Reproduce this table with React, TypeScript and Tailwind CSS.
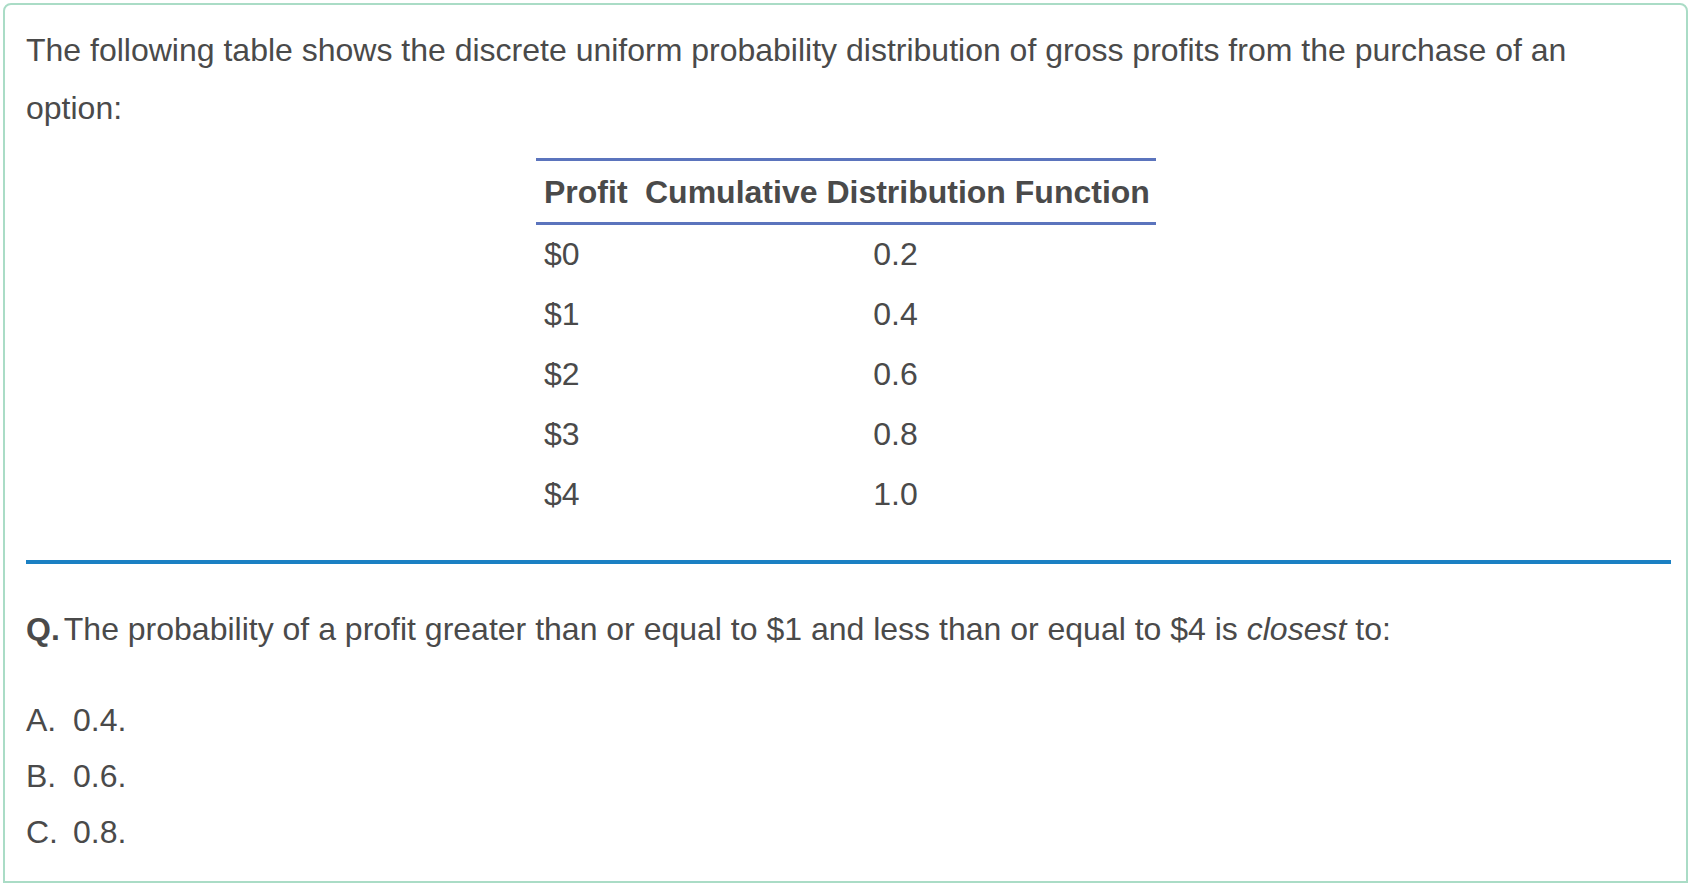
import React from 'react';

const rows: [string, string][] = [
  ['$0', '0.2'],
  ['$1', '0.4'],
  ['$2', '0.6'],
  ['$3', '0.8'],
  ['$4', '1.0'],
];

const options = [
  { key: 'A.', text: '0.4.' },
  { key: 'B.', text: '0.6.' },
  { key: 'C.', text: '0.8.' },
];

export default function App() {
  return (
    <div
      className="w-full h-[886px] bg-white pt-[3px] pl-[3px] overflow-hidden text-[#4a4a4a]"
      style={{ fontFamily: '"Liberation Sans", Arial, Helvetica, sans-serif' }}
    >
      <div className="w-[1685px] h-[880px] border-2 border-[#aadcc6] rounded-t-[8px] pl-[21px] pr-[15px] pt-[16px]">
        {/* Question stem */}
        <p className="text-[32px] leading-[58px]">
          The following table shows the discrete uniform probability distribution of gross profits from the purchase of an option:
        </p>

        {/* CDF table */}
        <table className="ml-[510px] mt-[21px] w-[620px] border-collapse table-fixed text-[32px]">
          <thead>
            <tr className="border-t-[3px] border-b-[3px] border-[#5b74bd] h-[64px]">
              <th className="w-[109px] text-left font-bold pl-[8px] pr-0 whitespace-nowrap">Profit</th>
              <th className="text-left font-bold pl-0 whitespace-nowrap">Cumulative Distribution Function</th>
            </tr>
          </thead>
          <tbody>
            {rows.map(([profit, cdf]) => (
              <tr key={profit} className="h-[60px]">
                <td className="pl-[8px]">{profit}</td>
                <td className="pr-[10px] text-center">{cdf}</td>
              </tr>
            ))}
          </tbody>
        </table>

        <div className="mt-[36px] h-[4px] bg-[#1b80c3]" />

        <p className="mt-[37px] text-[32px] leading-[56px]">
          <span className="font-bold mr-[4px]">Q.</span>The probability of a profit greater than or equal to $1 and less than or equal to $4 is <em>closest</em> to:
        </p>

        <div className="mt-[35px] flex flex-col">
          {options.map((o) => (
            <div key={o.key} className="flex text-[32px] leading-[56px]">
              <span className="w-[47px]">{o.key}</span>
              <span>{o.text}</span>
            </div>
          ))}
        </div>
      </div>
    </div>
  );
}
